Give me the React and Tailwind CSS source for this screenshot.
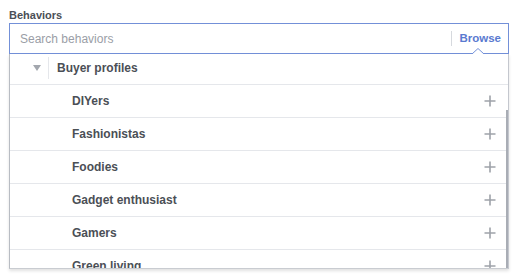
import { Plus } from "lucide-react";

/* Behavior categories shown under the expanded group */
const ITEMS = [
  "DIYers",
  "Fashionistas",
  "Foodies",
  "Gadget enthusiast",
  "Gamers",
  "Green living",
];

function PlusIcon() {
  return (
    <svg width="12" height="12" viewBox="0 0 12 12" className="shrink-0">
      <path d="M6 0.5v11M0.5 6h11" stroke="#9ea2a9" strokeWidth="1.6" />
    </svg>
  );
}

export default function App() {
  return (
    <div className="h-[279px] w-[521px] overflow-hidden bg-white px-[9px] font-['Liberation_Sans',Arial,sans-serif]">
      {/* Label */}
      <div className="mt-[8px] mb-[1px] text-[11px] leading-[14px] font-bold text-[#4b4f56]">
        Behaviors
      </div>

      {/* Search field */}
      <div className="relative flex h-[31px] w-[500px] items-center border border-[#7390d8] pl-[10px] pr-[7px]">
        <span className="flex-1 text-[12px] text-[#9a9ea6]">Search behaviors</span>
        <div className="mr-[7px] h-[15px] w-px bg-[#d6d9de]" />
        <span className="text-[11.5px] font-bold text-[#5a7ad0]">Browse</span>
        {/* Notch under Browse */}
        <svg
          width="12"
          height="6"
          viewBox="0 0 12 6"
          className="absolute -bottom-px right-[24px]"
        >
          <path d="M0 6 L6 0.5 L12 6" fill="#fff" stroke="#7390d8" strokeWidth="1" />
        </svg>
      </div>

      {/* Dropdown list */}
      <div className="relative h-[215px] w-[500px] overflow-hidden border-x border-b border-l-[#b8bcc3] border-r-[#c4c7ce] border-b-[#c9ccd1] shadow-[0_2px_3px_rgba(0,0,0,0.12)]">
        <div className="flex h-[31px] items-center border-b border-[#e5e7eb] pb-[3px]">
          <svg width="8" height="6" viewBox="0 0 8 6" className="ml-[23px]">
            <path d="M0 0h8L4 6z" fill="#a3a7ae" />
          </svg>
          <div className="ml-[7px] h-[22px] w-px bg-[#e5e7eb]" />
          <span className="ml-[8px] text-[12px] font-bold text-[#4b4f56]">
            Buyer profiles
          </span>
        </div>
        {ITEMS.map((item) => (
          <div
            key={item}
            className="flex h-[33px] shrink-0 items-center border-b border-[#e5e7eb] pl-[62px] pr-[12px]"
          >
            <span className="flex-1 text-[12px] font-bold text-[#4b4f56]">{item}</span>
            <PlusIcon />
          </div>
        ))}
        {/* Scrollbar thumb */}
        <div className="absolute top-[56px] right-0 h-[160px] w-[2px] bg-[#a9adb5]" />
      </div>
    </div>
  );
}
